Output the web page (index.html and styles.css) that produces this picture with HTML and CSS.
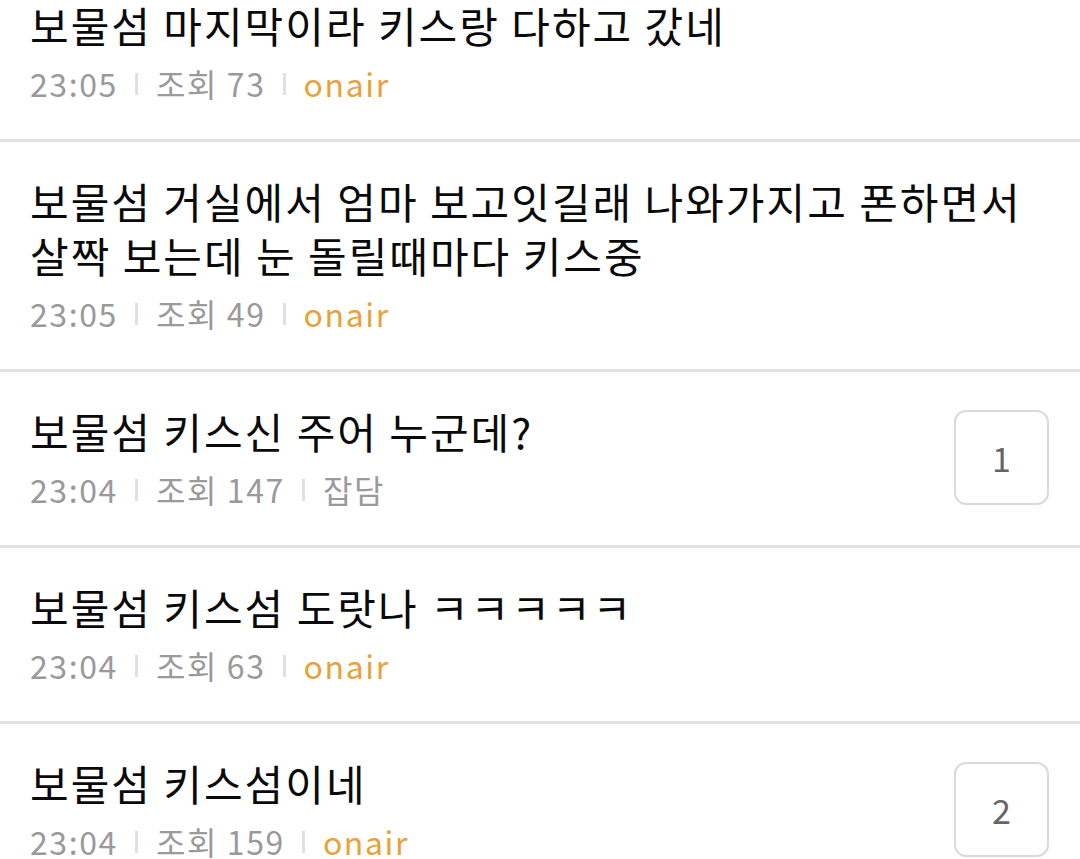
FILE: index.html
```html
<!DOCTYPE html>
<html>
  <head>
    <title>게시판</title>
    <link rel="stylesheet" href="styles.css">
  </head>
  <body>
    <ul class="post-list">
      <li class="post-item">
        <div class="post-body">
          <div class="post-title">보물섬 마지막이라 키스랑 다하고 갔네</div>
          <div class="post-meta">
            <span>23:05</span><span class="bar"></span><span>조회 73</span><span class="bar"></span><span class="cat onair">onair</span>
          </div>
        </div>
      </li>

      <li class="post-item">
        <div class="post-body">
          <div class="post-title">보물섬 거실에서 엄마 보고잇길래 나와가지고 폰하면서 살짝 보는데 눈 돌릴때마다 키스중</div>
          <div class="post-meta">
            <span>23:05</span><span class="bar"></span><span>조회 49</span><span class="bar"></span><span class="cat onair">onair</span>
          </div>
        </div>
      </li>

      <li class="post-item">
        <div class="post-body">
          <div class="post-title">보물섬 키스신 주어 누군데?</div>
          <div class="post-meta">
            <span>23:04</span><span class="bar"></span><span>조회 147</span><span class="bar"></span><span class="cat">잡담</span>
          </div>
        </div>
        <div class="comment-count">1</div>
      </li>

      <li class="post-item">
        <div class="post-body">
          <div class="post-title">보물섬 키스섬 도랏나 ㅋㅋㅋㅋㅋ</div>
          <div class="post-meta">
            <span>23:04</span><span class="bar"></span><span>조회 63</span><span class="bar"></span><span class="cat onair">onair</span>
          </div>
        </div>
      </li>

      <li class="post-item">
        <div class="post-body">
          <div class="post-title">보물섬 키스섬이네</div>
          <div class="post-meta">
            <span>23:04</span><span class="bar"></span><span>조회 159</span><span class="bar"></span><span class="cat onair">onair</span>
          </div>
        </div>
        <div class="comment-count">2</div>
      </li>
    </ul>
  </body>
</html>
```

FILE: styles.css
```css
:root {
  --text-color: #0a0a0a;
  --meta-color: #9a9a9a;
  --line-color: #e2e2e2;
  --onair-color: #e6a23c;
}

body {
  margin: 0;
  background: #fff;
  font-family: "Noto Sans CJK KR", "Noto Sans", sans-serif;
  color: var(--text-color);
}

.post-list {
  list-style: none;
  margin: -34px 0 0;
  padding: 0;
}

.post-item {
  display: flex;
  align-items: center;
  justify-content: space-between;
  gap: 20px;
  padding: 32px 14px 34px 30px;
  border-bottom: 3px solid var(--line-color);
}

.post-body {
  flex: 1;
  min-width: 0;
}

.post-title {
  font-size: 42px;
  line-height: 54px;
  letter-spacing: 2px;
}

.post-meta {
  display: flex;
  align-items: center;
  margin-top: 9px;
  font-size: 32px;
  line-height: 44px;
  letter-spacing: 1.6px;
  color: var(--meta-color);
}

.bar {
  display: inline-block;
  width: 3px;
  height: 22px;
  margin: 2px 18px 0 17px;
  background: #e0e0e0;
}

.cat.onair {
  color: var(--onair-color);
}

.comment-count {
  flex: none;
  width: 91px;
  height: 91px;
  margin-right: 17px;
  border: 2px solid #dadada;
  border-radius: 12px;
  display: flex;
  align-items: center;
  justify-content: center;
  font-size: 34px;
  color: #666;
}
```
